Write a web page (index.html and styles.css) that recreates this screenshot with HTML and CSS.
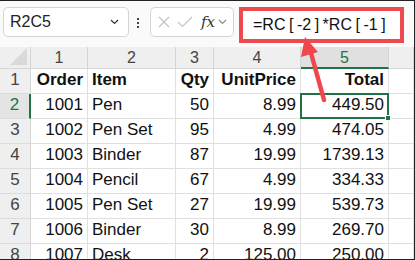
FILE: index.html
```html
<!DOCTYPE html>
<html lang="en">
<head>
  <meta charset="UTF-8" />
  <title>R1C1 formula</title>
  <link rel="stylesheet" href="styles.css">
</head>
<body>
  <div class="frame">
    <!-- Name box + formula bar -->
    <div class="toolbar">
      <div class="name-box">
        <span>R2C5</span>
        <svg class="chev" width="9" height="6" viewBox="0 0 9 6"><path d="M1 1 L4.5 4.5 L8 1" fill="none" stroke="#333" stroke-width="1.2"/></svg>
      </div>
      <div class="dots"><i></i><i></i><i></i></div>
      <div class="fx-box">
        <svg width="14" height="14" viewBox="0 0 14 14"><path d="M2 2 L12 12 M12 2 L2 12" stroke="#c4c4c4" stroke-width="1.2"/></svg>
        <svg width="16" height="12" viewBox="0 0 16 12"><path d="M1 6 L5.5 10.5 L15 1" fill="none" stroke="#c4c4c4" stroke-width="1.2"/></svg>
        <span class="fx">fx</span>
        <svg width="9" height="6" viewBox="0 0 9 6"><path d="M1 1 L4.5 4.5 L8 1" fill="none" stroke="#888" stroke-width="1.1"/></svg>
      </div>
      <div class="formula">=RC<b>[</b>-2<b>]</b>*RC<b>[</b>-1<b>]</b></div>
    </div>

    <!-- Sheet grid -->
    <div class="sheet">
      <div class="hd corner"><span class="tri"></span></div>
      <div class="hd">1</div>
      <div class="hd">2</div>
      <div class="hd">3</div>
      <div class="hd">4</div>
      <div class="hd col-sel">5</div>
      <div class="hd"></div>

      <div class="rh">1</div>
      <div class="c r bold">Order</div>
      <div class="c bold">Item</div>
      <div class="c r bold">Qty</div>
      <div class="c r bold">UnitPrice</div>
      <div class="c r bold">Total</div>
      <div class="c"></div>

      <div class="rh row-sel">2</div>
      <div class="c r">1001</div>
      <div class="c">Pen</div>
      <div class="c r">50</div>
      <div class="c r">8.99</div>
      <div class="c r active">449.50<span class="sel"><span class="handle"></span></span></div>
      <div class="c"></div>

      <div class="rh">3</div>
      <div class="c r">1002</div>
      <div class="c">Pen Set</div>
      <div class="c r">95</div>
      <div class="c r">4.99</div>
      <div class="c r">474.05</div>
      <div class="c"></div>

      <div class="rh">4</div>
      <div class="c r">1003</div>
      <div class="c">Binder</div>
      <div class="c r">87</div>
      <div class="c r">19.99</div>
      <div class="c r">1739.13</div>
      <div class="c"></div>

      <div class="rh">5</div>
      <div class="c r">1004</div>
      <div class="c">Pencil</div>
      <div class="c r">67</div>
      <div class="c r">4.99</div>
      <div class="c r">334.33</div>
      <div class="c"></div>

      <div class="rh">6</div>
      <div class="c r">1005</div>
      <div class="c">Pen Set</div>
      <div class="c r">27</div>
      <div class="c r">19.99</div>
      <div class="c r">539.73</div>
      <div class="c"></div>

      <div class="rh">7</div>
      <div class="c r">1006</div>
      <div class="c">Binder</div>
      <div class="c r">30</div>
      <div class="c r">8.99</div>
      <div class="c r">269.70</div>
      <div class="c"></div>

      <div class="rh">8</div>
      <div class="c r">1007</div>
      <div class="c">Desk</div>
      <div class="c r">2</div>
      <div class="c r">125.00</div>
      <div class="c r">250.00</div>
      <div class="c"></div>
    </div>

    <!-- Callout arrow -->
    <svg class="arrow" width="415" height="260" viewBox="0 0 415 260">
      <line x1="324" y1="99" x2="311" y2="52" stroke="#f0474f" stroke-width="4.5" stroke-linecap="round"/>
      <polygon points="305,36 301,56 318,51" fill="#f0474f"/>
    </svg>
  </div>
</body>
</html>
```

FILE: styles.css
```css
* {
  box-sizing: border-box;
}

body {
  margin: 0;
  background: #fff;
  font-family: 'Liberation Sans', Arial, sans-serif;
  color: #111;
}

.frame {
  position: relative;
  width: 415px;
  height: 260px;
  overflow: hidden;
  border-top: 1px solid #222;
  border-right: 1px solid #222;
  border-bottom: 1px solid #222;
  background: #fafafa;
}

/* Toolbar */
.toolbar {
  display: flex;
  align-items: flex-start;
  height: 46px;
  padding: 6px 0 0 3px;
}

.name-box {
  display: flex;
  align-items: center;
  justify-content: space-between;
  width: 126px;
  height: 30px;
  padding: 0 9px 0 6px;
  background: #fff;
  border: 1px solid #d4d4d4;
  border-radius: 5px;
  font-size: 16px;
  color: #222;
}

.dots {
  display: flex;
  flex-direction: column;
  gap: 2px;
  margin: 11px 0 0 8px;
  width: 3px;
}

.dots i {
  width: 2px;
  height: 2px;
  background: #444;
}

.fx-box {
  display: flex;
  align-items: center;
  gap: 6px;
  width: 84px;
  height: 30px;
  margin-left: 10px;
  padding-left: 6px;
  background: #fff;
  border: 1px solid #d4d4d4;
  border-radius: 5px;
}

.fx {
  font-family: 'DejaVu Serif', 'Liberation Serif', serif;
  font-style: italic;
  font-size: 15px;
  color: #333;
  margin-left: 2px;
  margin-right: -3px;
}

.formula {
  width: 165px;
  height: 36px;
  margin-left: 5px;
  padding: 0 0 0 10px;
  display: flex;
  align-items: center;
  background: #fff;
  border: 4px solid #ec4a4f;
  font-size: 16px;
  color: #111;
}

.formula b {
  font-weight: normal;
  margin: 0 3.5px;
}

/* Grid */
.sheet {
  display: grid;
  grid-template-columns: 31px 57px 88px 38px 87px 88px 1fr;
  grid-template-rows: 22px repeat(8, 25px);
  background: #fff;
}

.hd {
  display: flex;
  align-items: center;
  justify-content: center;
  background: #efefef;
  border-right: 1px solid #d6d6d6;
  border-bottom: 1px solid #d6d6d6;
  font-size: 16px;
  color: #444;
  padding-top: 1px;
}

.corner {
  align-items: flex-end;
  justify-content: flex-end;
  padding: 0 3px 3px 0;
}

.tri {
  width: 0;
  height: 0;
  border-left: 17px solid transparent;
  border-bottom: 17px solid #d9d9d9;
}

.col-sel {
  background: #e0e0e0;
  color: #217346;
  border-bottom: 2px solid #217346;
}

.rh {
  display: flex;
  align-items: flex-end;
  justify-content: center;
  padding-bottom: 3px;
  background: #efefef;
  border-right: 1px solid #d6d6d6;
  border-bottom: 1px solid #dcdcdc;
  font-size: 17px;
  color: #444;
}

.row-sel {
  background: #e4e4e4;
  color: #217346;
  border-right: 2px solid #217346;
}

.c {
  display: flex;
  align-items: flex-end;
  padding: 0 4px 3px 4px;
  border-right: 1px solid #e0e0e0;
  border-bottom: 1px solid #e0e0e0;
  font-size: 17px;
  white-space: nowrap;
  overflow: visible;
}

.r {
  justify-content: flex-end;
}

.bold {
  font-weight: bold;
}

.active {
  position: relative;
}

.sel {
  position: absolute;
  left: -1px;
  top: -1px;
  right: -1px;
  bottom: -1px;
  border: 2px solid #217346;
}

.handle {
  position: absolute;
  right: -4px;
  bottom: -4px;
  width: 6px;
  height: 6px;
  background: #217346;
  border: 1px solid #fff;
}

.arrow {
  position: absolute;
  left: 0;
  top: 0;
  pointer-events: none;
}
```
